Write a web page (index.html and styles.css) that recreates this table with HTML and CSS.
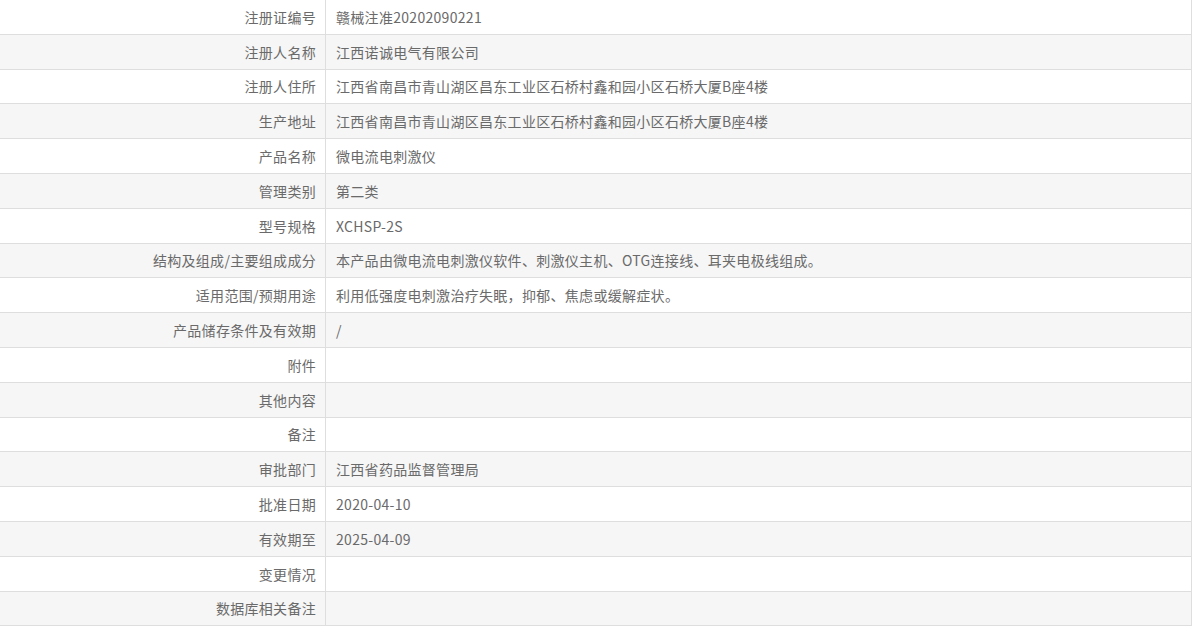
FILE: index.html
```html
<!DOCTYPE html>
<html lang="zh-CN">
<head>
<meta charset="utf-8">
<title>注册证信息</title>
<link rel="stylesheet" href="styles.css">
</head>
<body>
<table class="info">
  <tbody>
    <tr><th>注册证编号</th><td>赣械注准20202090221</td></tr>
    <tr><th>注册人名称</th><td>江西诺诚电气有限公司</td></tr>
    <tr><th>注册人住所</th><td>江西省南昌市青山湖区昌东工业区石桥村鑫和园小区石桥大厦B座4楼</td></tr>
    <tr><th>生产地址</th><td>江西省南昌市青山湖区昌东工业区石桥村鑫和园小区石桥大厦B座4楼</td></tr>
    <tr><th>产品名称</th><td>微电流电刺激仪</td></tr>
    <tr><th>管理类别</th><td>第二类</td></tr>
    <tr><th>型号规格</th><td>XCHSP-2S</td></tr>
    <tr><th>结构及组成/主要组成成分</th><td>本产品由微电流电刺激仪软件、刺激仪主机、OTG连接线、耳夹电极线组成。</td></tr>
    <tr><th>适用范围/预期用途</th><td>利用低强度电刺激治疗失眠，抑郁、焦虑或缓解症状。</td></tr>
    <tr><th>产品储存条件及有效期</th><td>/</td></tr>
    <tr><th>附件</th><td></td></tr>
    <tr><th>其他内容</th><td></td></tr>
    <tr><th>备注</th><td></td></tr>
    <tr><th>审批部门</th><td>江西省药品监督管理局</td></tr>
    <tr><th>批准日期</th><td>2020-04-10</td></tr>
    <tr><th>有效期至</th><td>2025-04-09</td></tr>
    <tr><th>变更情况</th><td></td></tr>
    <tr><th>数据库相关备注</th><td></td></tr>
  </tbody>
</table>
</body>
</html>
```
FILE: styles.css
```css
html, body {
  margin: 0;
  padding: 0;
  background: #ffffff;
}
body {
  font-family: "Microsoft YaHei", "Noto Sans CJK SC", "Noto Sans", sans-serif;
  font-size: 14px;
  color: #6a6a6a;
  letter-spacing: 0.3px;
}
.info {
  border-collapse: collapse;
  width: 1193px;
  margin-left: -1px;
  margin-top: -1px;
  table-layout: fixed;
}
.info th,
.info td {
  border: 1px solid #dedede;
  height: 33.8px;
  padding: 0 9px 0 10px;
  font-weight: normal;
  white-space: nowrap;
  vertical-align: middle;
}
.info th {
  width: 306px;
  text-align: right;
}
.info td {
  text-align: left;
}
.info tr:nth-child(even) th,
.info tr:nth-child(even) td {
  background: #f6f6f6;
}
```
